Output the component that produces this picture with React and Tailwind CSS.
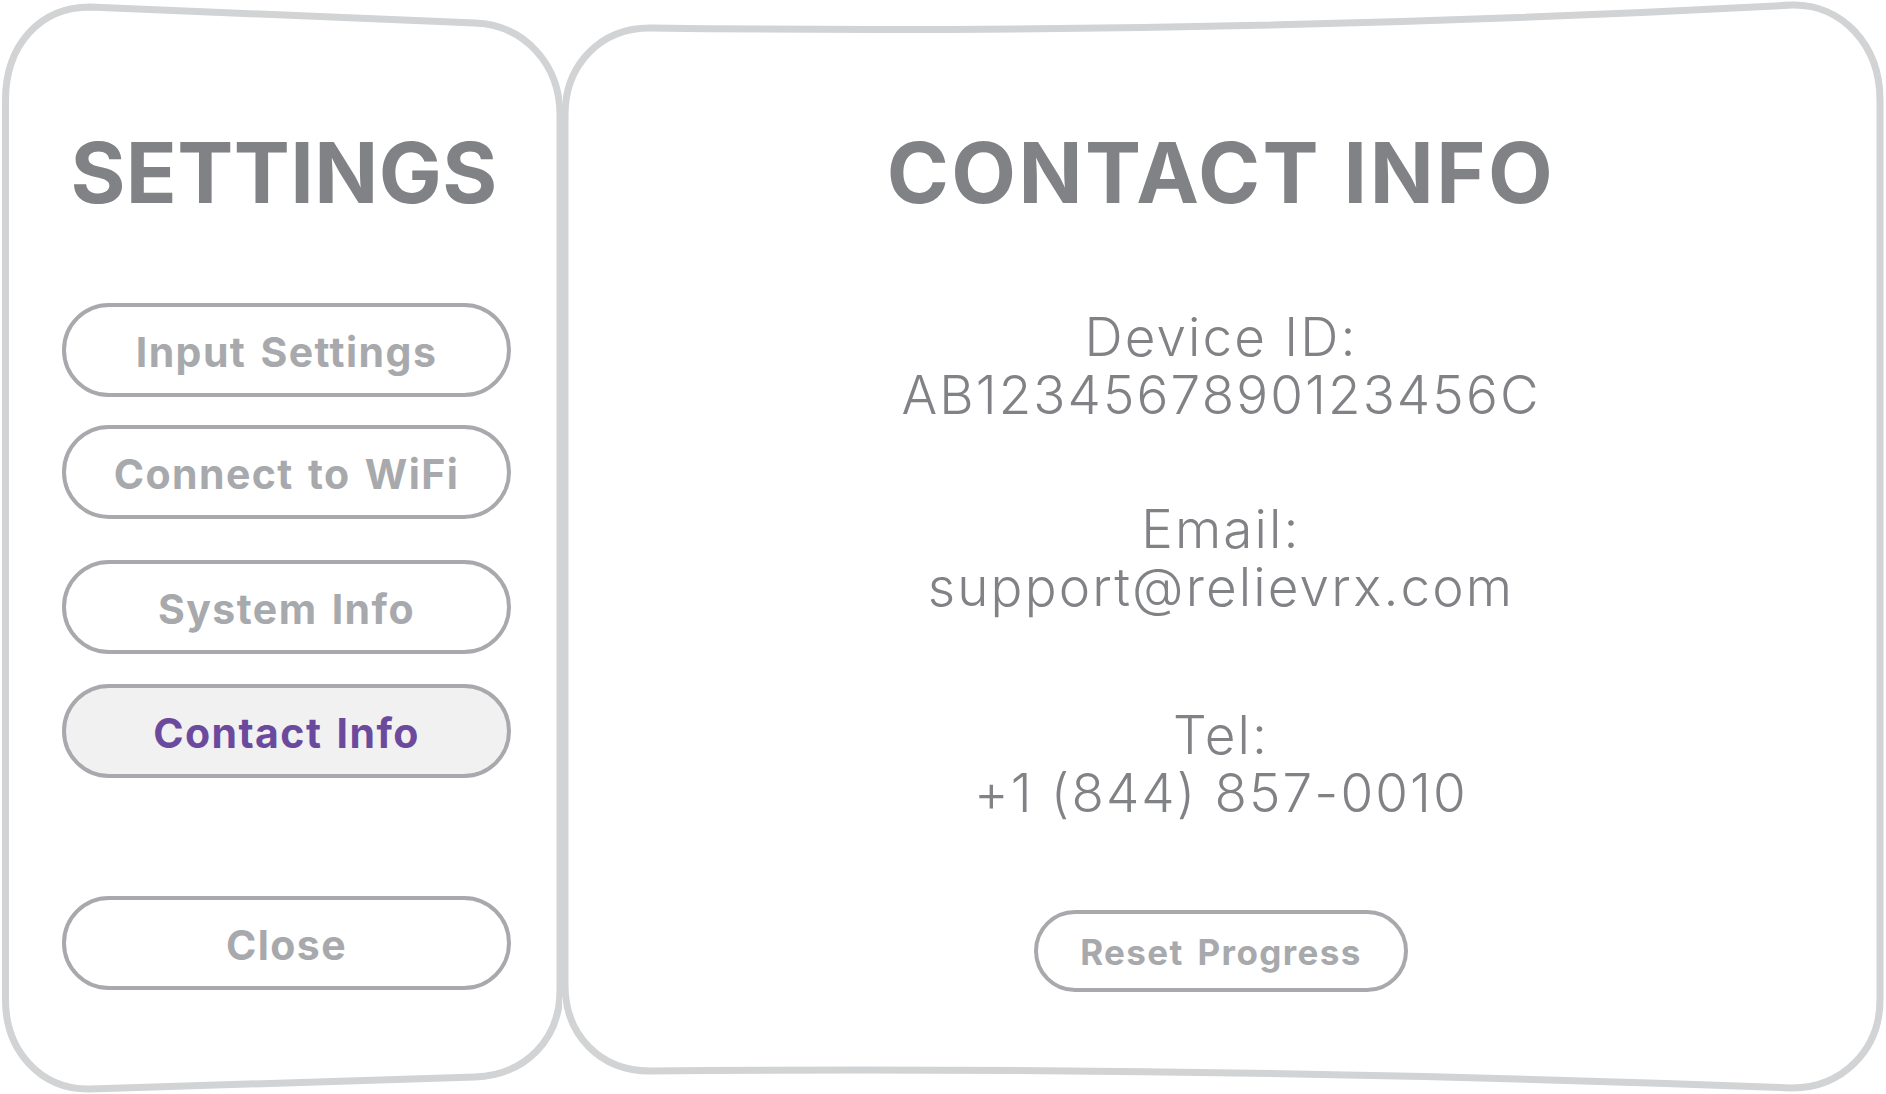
import React from "react";

const navItems = [
  { label: "Input Settings", mt: "mt-[88px]" },
  { label: "Connect to WiFi", mt: "mt-[28px]" },
  { label: "System Info", mt: "mt-[41px]" },
  { label: "Contact Info", mt: "mt-[30px]", active: true },
  { label: "Close", mt: "mt-[118px]" },
];

function PillButton({ label, active, className }) {
  return (
    <button
      className={
        "flex items-center justify-center w-[449px] h-[94px] pt-[4px] rounded-full border-[4px] border-[#a7a9ac] text-[41px] font-bold leading-none tracking-[0.035em] [word-spacing:3px] " +
        (active ? "bg-[#f1f1f2] text-[#6b4a9e] " : "bg-white text-[#a7a9ac] ") +
        (className || "")
      }
    >
      {label}
    </button>
  );
}

function InfoBlock({ label, value, className }) {
  return (
    <div className={"flex flex-col items-center text-[53px] leading-[58px] font-light tracking-[0.04em] text-[#808285] " + (className || "")}>
      <div>{label}</div>
      <div>{value}</div>
    </div>
  );
}

export default function App() {
  return (
    <div className="w-[1886px] h-[1094px] bg-white flex overflow-hidden font-[Inter,sans-serif]">
      {/* Left panel */}
      <div className="relative w-[562px] h-full shrink-0 flex flex-col items-center pl-[6px]">
        <svg
          className="absolute inset-0 pointer-events-none"
          width="562"
          height="1094"
          viewBox="0 0 562 1094"
          fill="none"
        >
          <path
            d="M 5.5 100 C 5.5 45 40 7 90 7 L 475 23 C 525 25 560 65 560 115 L 560 990 C 560 1040 525 1075 475 1077 L 90 1089 C 40 1090 5.5 1050 5.5 1000 Z"
            stroke="#d1d3d4"
            strokeWidth="7"
          />
        </svg>
        <h1 className="relative mt-[131px] text-[84px] leading-none font-bold text-[#808285] tracking-[0.005em]">
          SETTINGS
        </h1>
        <div className="relative self-start ml-[56px] flex flex-col">
          {navItems.map((it) => (
            <PillButton key={it.label} label={it.label} active={it.active} className={it.mt} />
          ))}
        </div>
      </div>

      {/* Right panel */}
      <div className="relative flex-1 h-full flex flex-col items-center pr-[6px]">
        <svg
          className="absolute inset-0 pointer-events-none"
          width="1324"
          height="1094"
          viewBox="0 0 1324 1094"
          fill="none"
        >
          <path
            d="M 3 115 C 3 65 38 28 88 28 Q 658 35.5 1230 5 C 1280 4 1318 45 1318 100 L 1318 1000 C 1318 1050 1280 1088 1230 1088 Q 658 1066 88 1071 C 38 1071 3 1035 3 985 Z"
            stroke="#d1d3d4"
            strokeWidth="7"
          />
        </svg>
        <h1 className="relative mt-[131px] text-[84px] leading-none font-bold text-[#808285] tracking-[0.03em]">
          CONTACT INFO
        </h1>
        <InfoBlock className="relative mt-[93px]" label="Device ID:" value="AB1234567890123456C" />
        <InfoBlock className="relative mt-[76px]" label="Email:" value="support@relievrx.com" />
        <InfoBlock className="relative mt-[90px]" label="Tel:" value="+1 (844) 857-0010" />
        <button className="relative mt-[88px] flex items-center justify-center w-[374px] h-[82px] pt-[3px] rounded-full border-[4px] border-[#a7a9ac] bg-white text-[35px] font-bold leading-none tracking-[0.04em] [word-spacing:4px] text-[#a7a9ac]">
          Reset Progress
        </button>
      </div>
    </div>
  );
}
